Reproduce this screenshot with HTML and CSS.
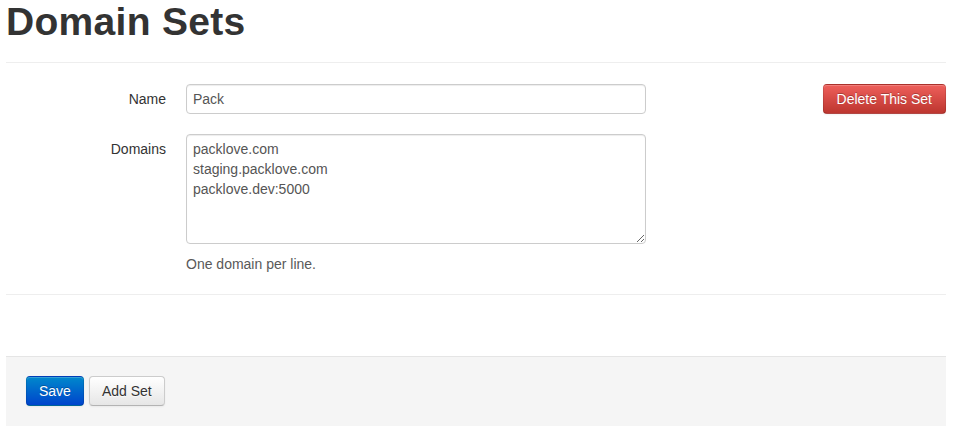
FILE: index.html
```html
<!DOCTYPE html>
<html>
<head>
<meta charset="utf-8">
<title>Domain Sets</title>
<link rel="stylesheet" href="styles.css">
</head>
<body>
<div class="container">
  <h1 class="page-title">Domain Sets</h1>
  <form class="form-horizontal">
    <div class="set">
      <div class="set-fields">
        <div class="control-group">
          <label class="control-label">Name</label>
          <div class="controls">
            <input class="input-name" type="text" value="Pack">
          </div>
        </div>
        <div class="control-group">
          <label class="control-label">Domains</label>
          <div class="controls">
            <textarea class="input-domains" rows="5">packlove.com
staging.packlove.com
packlove.dev:5000</textarea>
            <p class="help-block">One domain per line.</p>
          </div>
        </div>
      </div>
      <div class="set-actions">
        <button type="button" class="btn btn-danger">Delete This Set</button>
      </div>
    </div>
    <div class="form-actions">
      <button type="button" class="btn btn-primary">Save</button>
      <button type="button" class="btn">Add Set</button>
    </div>
  </form>
</div>
</body>
</html>
```

FILE: styles.css
```css
html, body {
  margin: 0;
  padding: 0;
  background: #fff;
}

body {
  font-family: "Liberation Sans", Arial, sans-serif;
  font-size: 14px;
  line-height: 20px;
  color: #333;
}

.container {
  width: 940px;
  margin-left: 6px;
}

.page-title {
  margin: 2px 0 0 0;
  font-size: 39px;
  letter-spacing: 0.3px;
  line-height: 40px;
  font-weight: bold;
  color: #333;
  padding-bottom: 20px;
  border-bottom: 1px solid #eee;
}

.form-horizontal {
  margin: 0;
}

.set {
  display: flex;
  justify-content: space-between;
  align-items: flex-start;
  padding-top: 21px;
  border-bottom: 1px solid #eee;
}

.control-group {
  display: flex;
  align-items: flex-start;
  margin-bottom: 20px;
}

.control-label {
  width: 160px;
  text-align: right;
  padding-top: 5px;
  line-height: 20px;
}

.controls {
  margin-left: 20px;
}

.input-name,
.input-domains {
  display: block;
  box-sizing: border-box;
  width: 460px;
  margin: 0;
  padding: 4px 6px;
  font-family: "Liberation Sans", Arial, sans-serif;
  font-size: 14px;
  line-height: 20px;
  color: #555;
  background: #fff;
  border: 1px solid #ccc;
  border-radius: 4px;
  box-shadow: inset 0 1px 1px rgba(0, 0, 0, 0.075);
  outline: none;
}

.input-name {
  height: 30px;
}

.input-domains {
  height: 110px;
  resize: both;
}

.help-block {
  margin: 10px 0 0 0;
  color: #595959;
}

.btn {
  display: inline-block;
  box-sizing: border-box;
  height: 30px;
  margin: 0;
  padding: 4px 12px;
  font-family: "Liberation Sans", Arial, sans-serif;
  font-size: 14px;
  line-height: 20px;
  color: #333;
  text-shadow: 0 1px 1px rgba(255, 255, 255, 0.75);
  background-color: #f5f5f5;
  background-image: linear-gradient(to bottom, #ffffff, #e6e6e6);
  border: 1px solid #ccc;
  border-bottom-color: #b3b3b3;
  border-radius: 4px;
  box-shadow: inset 0 1px 0 rgba(255, 255, 255, 0.2), 0 1px 2px rgba(0, 0, 0, 0.05);
  cursor: pointer;
}

.btn-primary {
  color: #fff;
  text-shadow: 0 -1px 0 rgba(0, 0, 0, 0.25);
  background-color: #006dcc;
  background-image: linear-gradient(to bottom, #0088cc, #0044cc);
  border-color: rgba(0, 0, 0, 0.1) rgba(0, 0, 0, 0.1) rgba(0, 0, 0, 0.25);
}

.btn-danger {
  padding: 4px 13px;
  color: #fff;
  text-shadow: 0 -1px 0 rgba(0, 0, 0, 0.25);
  background-color: #da4f49;
  background-image: linear-gradient(to bottom, #ee5f5b, #bd362f);
  border-color: rgba(0, 0, 0, 0.1) rgba(0, 0, 0, 0.1) rgba(0, 0, 0, 0.25);
}

.form-actions {
  display: flex;
  gap: 5px;
  margin-top: 61px;
  padding: 19px 20px 20px;
  background: #f5f5f5;
  border-top: 1px solid #e5e5e5;
}
```
